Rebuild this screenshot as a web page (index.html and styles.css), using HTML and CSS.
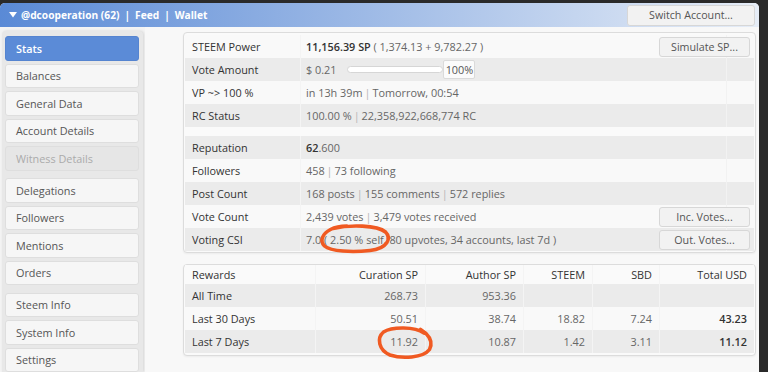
FILE: index.html
```html
<!DOCTYPE html>
<html lang="en">
<head>
<meta charset="utf-8">
<title>Stats</title>
<link rel="stylesheet" href="styles.css">
</head>
<body>
<div class="window">
  <header class="topbar">
    <div class="nav">
      <svg class="caret" width="8" height="6" viewBox="0 0 8 6"><polygon points="0,0 8,0 4,5.5" fill="#fff"/></svg>
      <span>@dcooperation (62)</span><span class="hsep">|</span><span>Feed</span><span class="hsep">|</span><span>Wallet</span>
    </div>
    <button class="btn switch">Switch Account...</button>
  </header>
  <div class="content">
    <nav class="sidebar">
      <div class="side-panel">
        <div class="group">
          <div class="nav-btn active">Stats</div>
          <div class="nav-btn">Balances</div>
          <div class="nav-btn">General Data</div>
          <div class="nav-btn">Account Details</div>
          <div class="nav-btn disabled">Witness Details</div>
        </div>
        <div class="group">
          <div class="nav-btn">Delegations</div>
          <div class="nav-btn">Followers</div>
          <div class="nav-btn">Mentions</div>
          <div class="nav-btn">Orders</div>
        </div>
        <div class="group">
          <div class="nav-btn">Steem Info</div>
          <div class="nav-btn">System Info</div>
          <div class="nav-btn">Settings</div>
        </div>
      </div>
    </nav>
    <main class="main">
      <section class="card stats">
        <div class="row">
          <div class="lbl">STEEM Power</div>
          <div class="val"><span class="strong">11,156.39 SP</span>&nbsp;( 1,374.13 + 9,782.27 )</div>
          <div class="end"></div>
          <button class="btn row-btn">Simulate SP...</button>
        </div>
        <div class="row alt">
          <div class="lbl">Vote Amount</div>
          <div class="val"><span>$ 0.21</span><span class="vote-bar"></span><span class="pct">100%</span></div>
          <div class="end"></div>
        </div>
        <div class="row">
          <div class="lbl">VP ~&gt; 100 %</div>
          <div class="val">in 13h 39m <span class="sep">|</span> Tomorrow, 00:54</div>
          <div class="end"></div>
        </div>
        <div class="row alt">
          <div class="lbl">RC Status</div>
          <div class="val">100.00 % <span class="sep">|</span> 22,358,922,668,774 RC</div>
          <div class="end"></div>
        </div>
        <div class="spacer"></div>
        <div class="row alt">
          <div class="lbl">Reputation</div>
          <div class="val"><span class="strong">62</span>.600</div>
          <div class="end"></div>
        </div>
        <div class="row">
          <div class="lbl">Followers</div>
          <div class="val">458 <span class="sep">|</span> 73 following</div>
          <div class="end"></div>
        </div>
        <div class="row alt">
          <div class="lbl">Post Count</div>
          <div class="val">168 posts <span class="sep">|</span> 155 comments <span class="sep">|</span> 572 replies</div>
          <div class="end"></div>
        </div>
        <div class="row">
          <div class="lbl">Vote Count</div>
          <div class="val">2,439 votes <span class="sep">|</span> 3,479 votes received</div>
          <div class="end"></div>
          <button class="btn row-btn">Inc. Votes...</button>
        </div>
        <div class="row alt">
          <div class="lbl">Voting CSI</div>
          <div class="val">7.0 ( 2.50 % self, 80 upvotes, 34 accounts, last 7d )</div>
          <div class="end"></div>
          <button class="btn row-btn">Out. Votes...</button>
        </div>
      </section>

      <section class="card rewards">
        <div class="rrow head">
          <div class="c first">Rewards</div>
          <div class="c">Curation SP</div>
          <div class="c">Author SP</div>
          <div class="c">STEEM</div>
          <div class="c">SBD</div>
          <div class="c">Total USD</div>
        </div>
        <div class="rrow alt">
          <div class="c first">All Time</div>
          <div class="c">268.73</div>
          <div class="c">953.36</div>
          <div class="c"></div>
          <div class="c"></div>
          <div class="c total"></div>
        </div>
        <div class="rrow">
          <div class="c first">Last 30 Days</div>
          <div class="c">50.51</div>
          <div class="c">38.74</div>
          <div class="c">18.82</div>
          <div class="c">7.24</div>
          <div class="c total">43.23</div>
        </div>
        <div class="rrow alt">
          <div class="c first">Last 7 Days</div>
          <div class="c">11.92</div>
          <div class="c">10.87</div>
          <div class="c">1.42</div>
          <div class="c">3.11</div>
          <div class="c total">11.12</div>
        </div>
      </section>

      <svg class="annot" width="614" height="345" viewBox="0 0 614 345">
        <g transform="translate(-145 -27)" fill="none" stroke="#f05a22" stroke-width="3.6" stroke-linecap="round" stroke-linejoin="round">
          <path d="M333 228.5 C350 224.5, 377 225, 385.5 232 C391.5 238, 388 248.5, 370 250.5 C352 252.5, 331 251.5, 324.5 246 C319.5 241, 322 234, 330.5 229.5 C336 226.5, 342 226, 347 226"/>
          <path d="M424 333 C415 326.5, 392 326.5, 383.5 332 C376.5 338, 378.5 350, 390 355 C402 359, 423 358, 429.5 349.5 C432.5 343.5, 430 337.5, 426 333.5 L420.5 329.5"/>
        </g>
      </svg>
    </main>
  </div>
</div>
</body>
</html>
```

FILE: styles.css
```css
* { box-sizing: border-box; }
html, body { margin: 0; height: 100%; }
body {
  background: #2a2a2a;
  font-family: "Open Sans", "Noto Sans", "DejaVu Sans", sans-serif;
  font-size: 10.85px;
  color: #555;
  overflow: hidden;
}
.window {
  width: 759px;
  height: 369px;
  margin-top: 3px;
  background: #f4f4f4;
  border-radius: 5px 5px 0 0;
  overflow: hidden;
  display: flex;
  flex-direction: column;
}
.topbar {
  height: 24px;
  flex: none;
  display: flex;
  align-items: center;
  justify-content: space-between;
  padding: 0 4px 0 9px;
  background: linear-gradient(to right, #5a8ad6 0%, #e6edf7 100%);
  color: #fff;
  font-weight: 700;
  font-size: 10.2px;
}
.nav { display: flex; align-items: center; }
.caret { margin-right: 4px; }
.hsep { margin: 0 5px; font-weight: 700; }
.btn {
  font-family: inherit;
  font-size: 10.7px;
  color: #555;
  background: #f2f2f2;
  border: 1px solid #d7d7d7;
  border-radius: 3px;
  padding: 0;
  display: flex;
  align-items: center;
  justify-content: center;
}
.switch { width: 128px; height: 21px; }

.content { flex: 1; display: flex; min-height: 0; }
.sidebar {
  width: 145px;
  flex: none;
  padding: 4px 0 0 2px;
}
.side-panel {
  width: 141px;
  height: 100%;
  background: #e8e8e8;
  border-radius: 4px 4px 0 0;
  padding: 5px 4px 0 3px;
  box-shadow: 1px 0 3px rgba(0,0,0,0.13);
}
.group + .group { margin-top: 7.5px; }
.nav-btn {
  height: 24.5px;
  margin-bottom: 3px;
  background: #f6f6f6;
  border: 1px solid #dedede;
  border-radius: 3px;
  padding-left: 10px;
  display: flex;
  align-items: center;
  color: #555;
}
.nav-btn.active {
  background: #5b8bd7;
  border-color: #5584d0;
  color: #fff;
  font-weight: 600;
}
.nav-btn.disabled {
  background: #e6e6e6;
  color: #ababab;
}

.main {
  flex: 1;
  position: relative;
  background: #f8f8f8;
  padding: 5px 3px 0 38px;
}
.card {
  background: #fafafa;
  border: 1px solid #dcdcdc;
  border-radius: 4px;
  padding: 2px 1px 1px;
  box-shadow: 0 1px 2px rgba(0,0,0,0.05);
}
.row {
  display: grid;
  grid-template-columns: 115px 1fr 28px;
  height: 23px;
  background: #f9f9f9;
}
.row.alt { background: #ebebeb; }
.lbl, .val, .end {
  grid-row: 1;
  display: flex;
  align-items: center;
  white-space: nowrap;
}
.lbl { grid-column: 1; padding-left: 7px; color: #333; }
.val { grid-column: 2; padding-left: 5px; border-left: 1px solid #f4f4f4; color: #666; }
.end { grid-column: 3; border-left: 1px solid #f2f2f2; }
.strong { color: #333; font-weight: 600; }
.sep { color: #b5b5b5; margin: 0 2px; }
.spacer { height: 9px; }
.row-btn {
  grid-column: 2 / 4;
  grid-row: 1;
  justify-self: end;
  align-self: center;
  width: 91px;
  height: 20px;
  margin-right: 4px;
}
.vote-bar {
  width: 96px;
  height: 7px;
  margin-left: 11px;
  background: #fff;
  border: 1px solid #d6d6d6;
  border-radius: 4px;
}
.pct {
  width: 32px;
  height: 19px;
  background: #fbfbfb;
  border: 1px solid #dadada;
  border-radius: 2px;
  display: flex;
  align-items: center;
  justify-content: center;
  color: #555;
}

.rewards { margin-top: 11px; padding: 0 1px 2px; }
.rrow {
  display: grid;
  grid-template-columns: 130px 110px 98px 69px 67px 1fr;
  height: 23px;
  background: #f9f9f9;
}
.rrow.head { height: 19px; background: #fafafa; color: #333; }
.rrow.alt { background: #ebebeb; }
.c {
  display: flex;
  align-items: center;
  justify-content: flex-end;
  padding: 0 7px;
  border-left: 1px solid #f4f4f4;
  color: #666;
  white-space: nowrap;
}
.rrow.head .c { color: #333; }
.c.first { justify-content: flex-start; border-left: none; color: #333; }
.c.total { color: #333; font-weight: 600; }

.annot {
  position: absolute;
  left: 0;
  top: 0;
  pointer-events: none;
}
```
